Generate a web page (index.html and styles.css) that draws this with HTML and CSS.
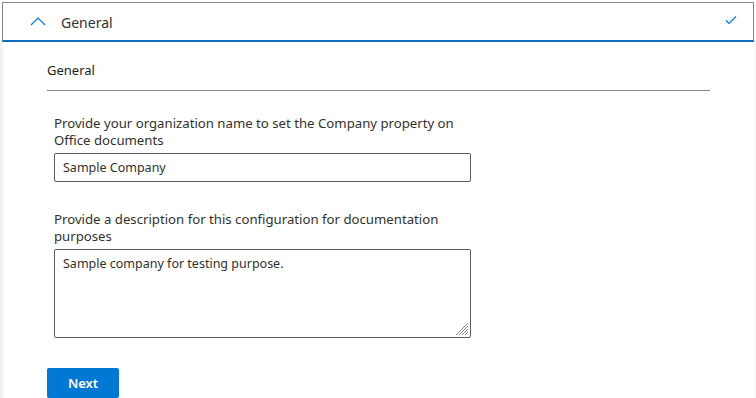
FILE: index.html
```html
<!DOCTYPE html>
<html>
<head>
<meta charset="utf-8">
<link rel="stylesheet" href="styles.css">
</head>
<body>
<div class="page">
  <div class="acc-header">
    <svg class="chev" width="16" height="10" viewBox="0 0 16 10"><path d="M1 9 L8 2 L15 9" fill="none" stroke="#0078d4" stroke-width="1.2"/></svg>
    <span class="acc-title">General</span>
    <svg class="check" width="12" height="10" viewBox="0 0 12 10"><path d="M1 5.5 L4 8.5 L11 1.5" fill="none" stroke="#0078d4" stroke-width="1.2"/></svg>
  </div>
  <div class="panel">
    <div class="section-title">General</div>
    <div class="divider"></div>
    <div class="field first">
      <label class="lbl">Provide your organization name to set the Company property on Office documents</label>
      <input class="txt" type="text" value="Sample Company">
    </div>
    <div class="field">
      <label class="lbl">Provide a description for this configuration for documentation purposes</label>
      <div class="area-wrap">
        <textarea class="area">Sample company for testing purpose.</textarea>
        <svg class="grip" width="14" height="14" viewBox="0 0 14 14"><path d="M13 1 L1 13 M13 4 L4 13 M13 7 L7 13 M13 10 L10 13" stroke="#8a8886" stroke-width="1" fill="none"/></svg>
      </div>
    </div>
    <button class="next">Next</button>
  </div>
</div>
</body>
</html>
```
FILE: styles.css
```css
html, body { margin: 0; padding: 0; background: #fff; }
body { font-family: "Noto Sans", "Open Sans", sans-serif; color: #323130; overflow: hidden; }
.page { width: 756px; height: 398px; padding-top: 2px; box-sizing: border-box; }
.acc-header {
  margin: 0 2px 0 2px;
  height: 40px;
  box-sizing: border-box;
  border: 1px solid #8a8886;
  border-bottom: 2px solid #0f6cbd;
  display: flex;
  align-items: center;
  padding-left: 27px;
  padding-right: 16px;
}
.chev { margin-top: -1px; }
.acc-title { margin-left: 15px; font-size: 14px; flex: 1; margin-top: 1px; }
.check { margin-top: -3px; }
.panel {
  border-left: 3px solid #f3f2f1;
  border-right: 1px solid #f3f2f1;
  padding: 0 0 0 44px;
  height: 360px;
}
.section-title { font-size: 13px; padding-top: 19px; line-height: 18px; color: #201f1e; }
.divider { width: 663px; height: 1px; background: #8a8886; margin-top: 11px; }
.field { margin-left: 7px; width: 417px; display: flex; flex-direction: column; }
.field.first { margin-top: 24px; }
.field + .field { margin-top: 29px; }
.lbl { font-size: 13.2px; line-height: 17px; color: #323130; margin-bottom: 4px; }
.txt, .area {
  font-family: inherit; font-size: 12.5px; color: #323130;
  border: 1px solid #605e5c; border-radius: 2px;
  box-sizing: border-box; width: 417px; margin: 0; outline: none;
}
.txt { height: 29px; padding: 0 8px; }
.area-wrap { position: relative; width: 417px; height: 89px; }
.area { display: block; height: 89px; padding: 5px 8px; resize: none; line-height: 18px; }
.grip { position: absolute; right: 2px; bottom: 2px; }
.next {
  margin-top: 30px;
  width: 72px; height: 30px;
  background: #0078d4; color: #fff; border: none; border-radius: 2px;
  font-family: inherit; font-size: 13px; font-weight: 600;
}
```
